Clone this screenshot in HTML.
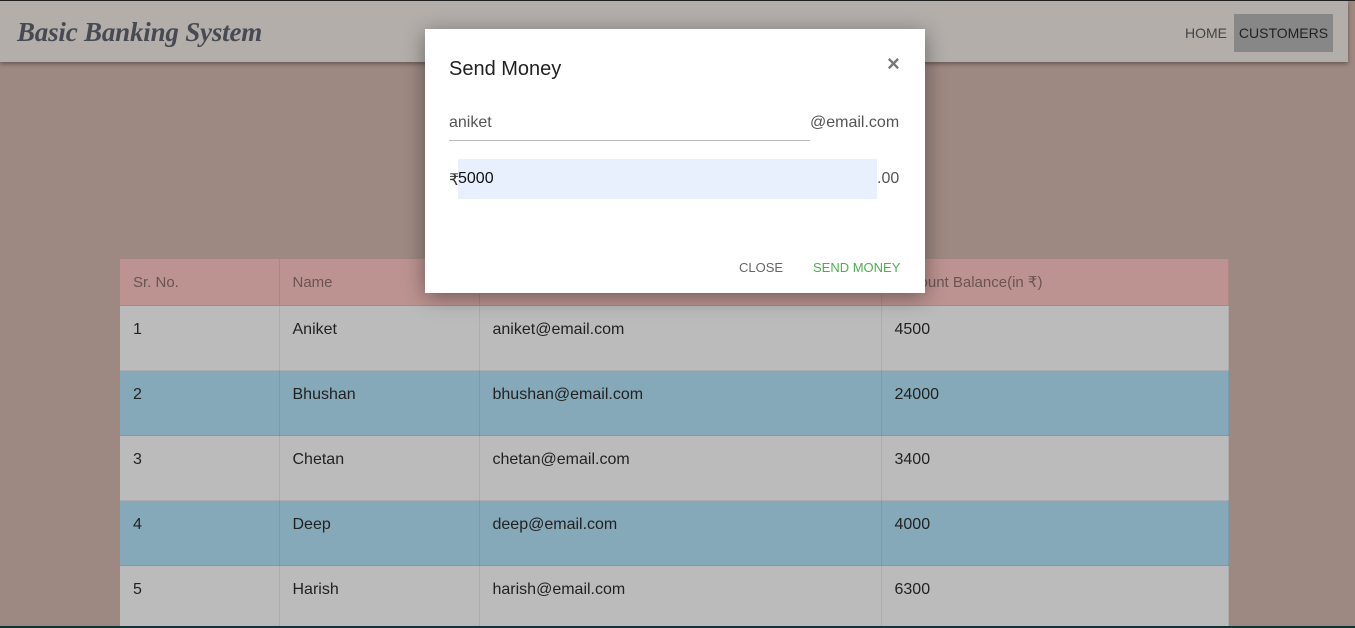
<!DOCTYPE html>
<html><head><style>
html,body{margin:0;width:1355px;height:628px;overflow:hidden}
body{background:#9e8882;font-family:"Liberation Sans",sans-serif;position:relative}
.top{position:absolute;left:0;top:0;width:1355px;height:1px;background:#222}
.nav{position:absolute;left:0;top:1px;width:1348px;height:61px;background:#b3aeaa;box-shadow:0 2px 4px rgba(0,0,0,.35)}
.brand{position:absolute;left:17px;top:16px;font-family:"Liberation Serif",serif;font-style:italic;font-weight:bold;font-size:27px;color:#474a52;letter-spacing:-0.2px}
.home{position:absolute;left:1185px;top:24px;font-size:14px;color:#444}
.cust{position:absolute;left:1234px;top:13px;width:99px;height:38px;background:#878787;font-size:14px;color:#222;line-height:38px;text-align:center}
table{position:absolute;left:120px;top:259px;width:1109px;border-collapse:collapse;font-size:16px;table-layout:fixed}
td,th{border-right:1px solid rgba(0,0,0,.08);padding:0 13px;text-align:left;vertical-align:top;color:#222}
th{height:46px;background:#bc9390;font-weight:normal;color:#6a5452;font-size:15px;vertical-align:middle;border-bottom:1px solid #ad8683}
td{height:65px;padding-top:15px;box-sizing:border-box;border-bottom:1px solid rgba(0,0,0,.08)}
tr.g td{background:#bbbbbb}tr.b td{background:#86a9b9}
.modal{position:absolute;left:425px;top:29px;width:500px;height:264px;background:#fff;box-shadow:0 4px 20px rgba(0,0,0,.4)}
.bot{position:absolute;left:0;top:626px;width:1355px;height:2px;background:#0f3338}
</style></head><body>
<div class="top"></div>
<div class="nav"><div class="brand">Basic Banking System</div><div class="home">HOME</div><div class="cust">CUSTOMERS</div></div>
<table>
<colgroup><col style="width:159px"><col style="width:200px"><col style="width:402px"><col></colgroup>
<tr><th>Sr. No.</th><th>Name</th><th>Email</th><th>Account Balance(in ₹)</th></tr>
<tr class="g"><td>1</td><td>Aniket</td><td>aniket@email.com</td><td>4500</td></tr>
<tr class="b"><td>2</td><td>Bhushan</td><td>bhushan@email.com</td><td>24000</td></tr>
<tr class="g"><td>3</td><td>Chetan</td><td>chetan@email.com</td><td>3400</td></tr>
<tr class="b"><td>4</td><td>Deep</td><td>deep@email.com</td><td>4000</td></tr>
<tr class="g"><td>5</td><td>Harish</td><td>harish@email.com</td><td>6300</td></tr>
</table>
<div class="modal">
<div style="position:absolute;left:24px;top:29px;font-size:20px;color:#222">Send Money</div>
<div style="position:absolute;left:462px;top:22px;font-size:22px;color:#777;font-weight:bold">×</div>
<div style="position:absolute;left:24px;top:85px;font-size:16px;color:#555">aniket</div>
<div style="position:absolute;left:24px;top:111px;width:361px;height:1px;background:#bbb"></div>
<div style="position:absolute;left:385px;top:85px;font-size:16px;color:#555">@email.com</div>
<div style="position:absolute;left:33px;top:130px;width:419px;height:40px;background:#e8f0fd"></div>
<div style="position:absolute;left:24px;top:141px;font-size:16px;color:#333">₹</div>
<div style="position:absolute;left:33px;top:141px;font-size:16px;color:#111">5000</div>
<div style="position:absolute;left:452px;top:141px;font-size:16px;color:#555">.00</div>
<div style="position:absolute;left:314px;top:231px;font-size:13px;color:#666">CLOSE</div>
<div style="position:absolute;left:388px;top:231px;font-size:13px;color:#4caf50">SEND MONEY</div>
</div>
<div class="bot"></div>
</body></html>
